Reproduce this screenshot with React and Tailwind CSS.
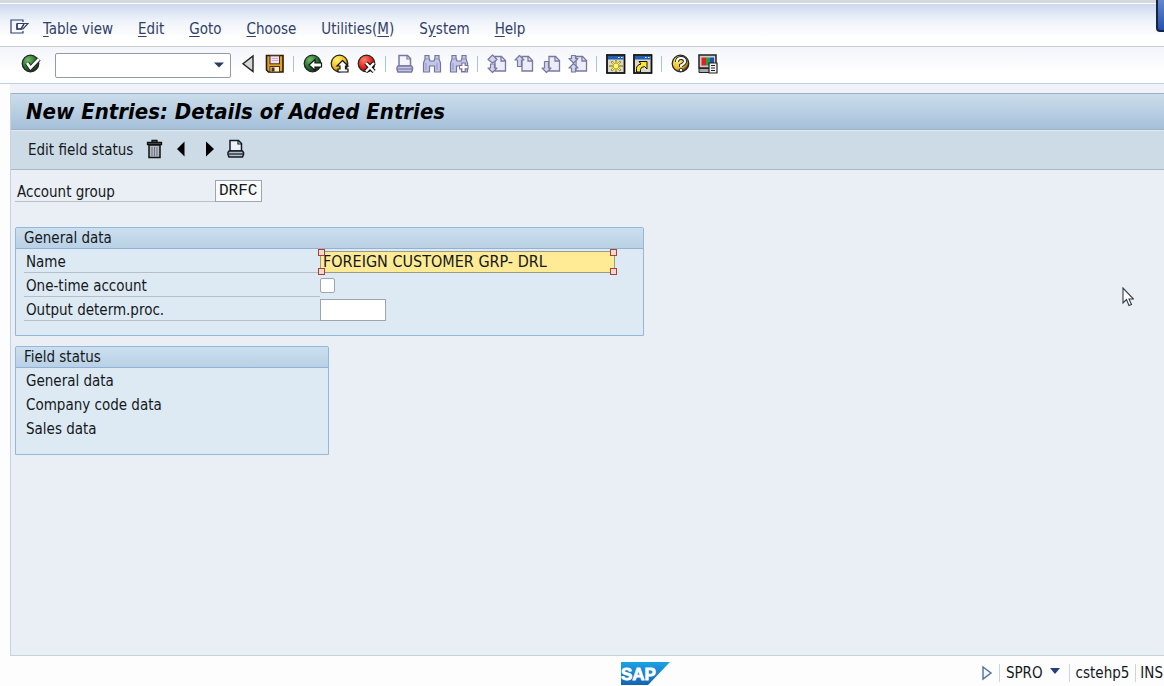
import React, { useState } from 'react';

const menuItems = [
  { before: '', key: 'T', after: 'able view' },
  { before: '', key: 'E', after: 'dit' },
  { before: '', key: 'G', after: 'oto' },
  { before: '', key: 'C', after: 'hoose' },
  { before: 'Utilities(', key: 'M', after: ')' },
  { before: 'S', key: 'y', after: 'stem' },
  { before: '', key: 'H', after: 'elp' }
];

function Icon({ children }) {
  return <svg className="h-5 w-5 shrink-0" viewBox="0 0 20 20" aria-hidden="true">{children}</svg>;
}

function ToolButton({ label, disabled, children }) {
  return <button type="button" aria-label={label} disabled={disabled} className="h-5 w-5 shrink-0">
    <Icon>{children}</Icon>
  </button>;
}

function Separator() {
  return <span className="ml-px mr-0.5 h-4 w-px shrink-0 bg-[#a9c4de]" />;
}

function Ball({ id, light, dark }) {
  return <>
    <defs>
      <radialGradient id={id} cx="35%" cy="28%" r="75%">
        <stop offset="0" stopColor={light} />
        <stop offset="0.7" stopColor={dark} />
        <stop offset="1" stopColor="#222" />
      </radialGradient>
    </defs>
    <circle cx="9.5" cy="9.5" r="8.3" fill={`url(#${id})`} stroke="#222" strokeWidth="1.2" />
  </>;
}

function PageShape() {
  return <>
    <path d="M8 2.500h6.500l4 4V17H8z" fill="#ecedf8" stroke="#7779a0" strokeWidth="1.300" />
    <path d="M14 2.500V7h4.500" fill="none" stroke="#7779a0" strokeWidth="1.300" />
  </>;
}

function Arrow({ d }) {
  return <path d={d} fill="#d4d5ec" stroke="#7779a0" strokeWidth="1.200" strokeLinejoin="round" />;
}

function Binoculars() {
  return <>
    <path d="M3 1.500h4V4l1 3h4l1-3V1.500h4V5l1.500 4v9h-6v-6h-5v6h-6V9L3 5z" fill="#c3c6e8" stroke="#73759e" strokeWidth="1.200" />
    <path d="M3 5h4M13 5h4M4 9v7M15 9v7" stroke="#8f92bd" />
  </>;
}

function Printer({ stroke, paper, tray }) {
  return <>
    <path d="M4 12V1.500h8.500l3 3V12z" fill={paper} stroke={stroke} strokeWidth="1.500" />
    <path d="M12 1.500V5h3.500" fill="none" stroke={stroke} strokeWidth="1.200" />
    <path d="M3 12h13.500l1 1.500v2L16.500 18H3l-1-2.500v-2z" fill={tray} stroke={stroke} strokeWidth="1.500" />
    <path d="M3 15h14" stroke={stroke} strokeWidth="1.200" />
  </>;
}

function WindowShape() {
  return <>
    <rect x="1" y="1" width="17.500" height="18" fill="#dcdac6" stroke="#111" strokeWidth="1.800" />
    <rect x="2" y="2" width="15.500" height="3.500" fill="#1f5fb8" />
    <path d="M12 3.500h1.500M15 3.500h1.500" stroke="#fff" />
  </>;
}

function Toolbar() {
  const [command, setCommand] = useState('');
  return <div className="flex h-[37px] items-center gap-[7px] overflow-hidden border-b border-[#bed0e2] bg-linear-to-b from-[#f3f5fa] to-white to-70% pb-0.5 pl-[21px]">
    <ToolButton label="Enter">
      <Ball id="ok" light="#74ba6b" dark="#176b20" />
      <path d="M6 9l3.500 5L18 5" fill="none" stroke="#222" strokeWidth="4.500" />
      <path d="M6 9l3.500 5L18 5" fill="none" stroke="#fff" strokeWidth="2.600" />
    </ToolButton>
    <div className="relative mt-0.5 mr-1 ml-[7px] w-44 shrink-0">
      <input aria-label="Command" value={command} onChange={e => setCommand(e.target.value)} className="block h-[25px] w-full rounded-xs border border-[#929ba4] bg-white pr-6 pl-1 outline-none" />
      <button type="button" aria-label="Command history" className="absolute top-[7px] right-1.5">
        <svg className="h-2.5 w-3" viewBox="0 0 12 10"><path d="M1 2.500h10L6 7.500z" fill="#293b66" /></svg>
      </button>
    </div>
    <div className="flex items-center gap-[7px]">
      <button type="button" aria-label="Collapse command field" className="-ml-1 h-5 w-5 shrink-0">
        <Icon><path d="M15 2v15.500L5 9.800z" fill="#d5d7dc" stroke="#222" strokeWidth="1.400" /></Icon>
      </button>
      <ToolButton label="Save">
        <path d="M1.500 1.500h16.500v16.500H3.500l-2-2z" fill="#dda128" stroke="#2b1b08" strokeWidth="1.600" />
        <rect x="5" y="1.800" width="9.500" height="8" fill="#f1dff4" stroke="#4b3013" />
        <path d="M7 4.500h6M7 6.500h6" stroke="#c9abd8" />
        <rect x="5" y="12.500" width="9.500" height="5.500" fill="#fff0c9" stroke="#4b3013" />
        <rect x="6.500" y="13.500" width="3" height="4" fill="#4b3013" />
      </ToolButton>
      <Separator />
      <ToolButton label="Back">
        <Ball id="back" light="#72b96a" dark="#166522" />
        <path d="M6 11l6-5.500V9h6.500v4H12v3.500z" fill="#fff" stroke="#111" strokeWidth="1.200" />
      </ToolButton>
      <ToolButton label="Exit">
        <Ball id="exit" light="#fff46c" dark="#f0b31a" />
        <path d="M12.500 6.500l5.500 5.500h-2.500v3H18v3H8v-3h2v-3H7z" fill="#fff" stroke="#111" strokeWidth="1.200" />
      </ToolButton>
      <ToolButton label="Cancel">
        <Ball id="cancel" light="#ff8069" dark="#d81a15" />
        <path d="M9 9l8 8.500M17 9l-8 8.500" stroke="#111" strokeWidth="4.500" />
        <path d="M9 9l8 8.500M17 9l-8 8.500" stroke="#fff" strokeWidth="2.500" />
      </ToolButton>
      <Separator />
      <ToolButton label="Print" disabled><Printer stroke="#7779a0" paper="#f4f4fb" tray="#c4c6e4" /></ToolButton>
      <ToolButton label="Find" disabled><Binoculars /></ToolButton>
      <ToolButton label="Find next" disabled>
        <Binoculars />
        <path d="M14.500 8.500v9.500M10 13.200h9.500" stroke="#73759e" strokeWidth="4.500" />
        <path d="M14.500 9.500v7.500M11 13.200h7.500" stroke="#fff" strokeWidth="2.200" />
      </ToolButton>
      <Separator />
      <ToolButton label="First page" disabled>
        <PageShape />
        <Arrow d="M5.500 1l4.500 4.500L5.500 9 1 5.500z" />
        <Arrow d="M5.500 18.500L10 14H7.500v-4h-4v4H1z" />
      </ToolButton>
      <ToolButton label="Previous page" disabled>
        <PageShape />
        <Arrow d="M5.500 1.500L10 6H7.500v6.500h-4V6H1z" />
      </ToolButton>
      <ToolButton label="Next page" disabled>
        <PageShape />
        <Arrow d="M5.500 18.500L10 14H7.500V7.500h-4V14H1z" />
      </ToolButton>
      <ToolButton label="Last page" disabled>
        <PageShape />
        <Arrow d="M3.500 1.500h4v3H10L5.500 9 1 4.500h2.500z" />
        <Arrow d="M5.500 9.500L10 14H7.500v4h-4v-4H1z" />
      </ToolButton>
      <Separator />
      <ToolButton label="Create session">
        <WindowShape />
        <path d="M10 6v12M3.500 12h13M5.500 7.500l9 9M14.500 7.500l-9 9" stroke="#6b6824" strokeWidth="1.800" />
        <path d="M10 6.500v11M4 12h12M6 8l8 8M14 8l-8 8" stroke="#fff04a" strokeWidth="1.100" />
        <circle cx="10" cy="12" r="2.200" fill="#fff47a" />
      </ToolButton>
      <ToolButton label="Create shortcut">
        <WindowShape />
        <path d="M3.500 18v-3.500q0-3.500 4.500-4.500l-2-2.500h8V15l-2.500-2.500q-4 .5-4 3V18z" fill="#ffe62e" stroke="#111" />
      </ToolButton>
      <Separator />
      <ToolButton label="Help">
        <Ball id="help" light="#fff47a" dark="#efb524" />
        <path d="M6 8q0-4 4-4t4 3.500q0 2-4 4v1.500" fill="none" stroke="#222" strokeWidth="4" />
        <path d="M6 8q0-4 4-4t4 3.500q0 2-4 4v1.500" fill="none" stroke="#fff" strokeWidth="2.200" />
        <circle cx="10" cy="16" r="1.700" fill="#fff" stroke="#222" strokeWidth="0.800" />
      </ToolButton>
      <ToolButton label="Customize local layout">
        <path d="M1 1h17v13H1z" fill="#ccc" stroke="#222" strokeWidth="1.500" />
        <path d="M3.500 3.500h4.500v8H3.500z" fill="#e51e24" />
        <path d="M8 3.500h4v8H8z" fill="#18a83b" />
        <path d="M12 3.500h4v8h-4z" fill="#2849b9" />
        <path d="M1 14.500h12v4H1z" fill="#aaa" stroke="#222" />
        <path d="M11 9h8v10h-8z" fill="#f2f2f2" stroke="#222" strokeWidth="1.200" />
        <path d="M13 11.500h4M13 14h4M13 16.500h4" stroke="#222" />
      </ToolButton>
    </div>
  </div>;
}

function Group({ title, className, children }) {
  return <section className={`max-w-full rounded-t-xs border border-[#94b7da] bg-[#deeaf3] ${className}`}>
    <h2 className="h-[21px] border-b border-[#8fb2d6] bg-linear-to-b from-[#cbdfee] to-[#bad1e5] pl-2 leading-[21px]">{title}</h2>
    {children}
  </section>;
}

function FieldRow({ id, label, children }) {
  return <div className="flex h-6 items-end pl-2">
    <label htmlFor={id} className="h-[23px] w-[296px] shrink-0 border-b border-[#b4bfc8] pl-0.5 leading-6">{label}</label>
    {children}
  </div>;
}

function FocusCorner({ className }) {
  return <span className={`absolute h-[7px] w-[7px] border border-[#b63b31] bg-[#e5ded4] ${className}`} />;
}

function StatusBar() {
  return <footer className="flex h-[30px] shrink-0 items-center overflow-hidden bg-[#fdfdfd] pt-1 whitespace-nowrap">
    <div className="flex flex-1 justify-end">
      <svg className="mr-[310px] h-[23px] w-[50px] shrink-0" viewBox="0 0 50 23" role="img" aria-label="SAP">
        <defs>
          <linearGradient id="sap" x1="0" y1="0" x2="0" y2="1">
            <stop offset="0" stopColor="#1ba2e4" />
            <stop offset="1" stopColor="#1564b5" />
          </linearGradient>
        </defs>
        <path d="M0 0h49L27 23H0z" fill="url(#sap)" />
        <text x="0" y="18" fill="#fff" stroke="#fff" strokeWidth="0.800" fontFamily="Liberation Sans, sans-serif" fontSize="17" fontWeight="700">SAP</text>
      </svg>
    </div>
    <button type="button" aria-label="Show status" className="mr-1.5">
      <svg className="h-4 w-3" viewBox="0 0 12 16"><path d="M2 2l8 6-8 6z" fill="#f4f7fc" stroke="#4e7199" strokeWidth="1.400" /></svg>
    </button>
    <button type="button" className="flex h-[18px] items-center gap-1.5 border-l border-[#ccd3dc] pr-2 pl-1.5">
      SPRO
      <svg className="mb-1 h-2 w-3" viewBox="0 0 12 8"><path d="M1 1h10L6 7z" fill="#233e7d" /></svg>
    </button>
    <span className="flex h-[18px] items-center border-l border-[#ccd3dc] px-1.5">cstehp5</span>
    <span className="flex h-[18px] items-center border-l border-[#ccd3dc] pr-px pl-1">INS</span>
  </footer>;
}

export default function App() {
  const [name, setName] = useState('FOREIGN CUSTOMER GRP- DRL');
  const [oneTime, setOneTime] = useState(false);
  const [output, setOutput] = useState('');
  return <div className="relative flex min-h-screen flex-col overflow-hidden bg-[#fdfdfd] font-['DejaVu_Sans_Condensed','DejaVu_Sans',sans-serif] text-[15px] leading-5 text-[#141820]">
    <header>
      <div className="h-1 border-b border-white bg-[#d5d9df]" />
      <nav className="flex h-[43px] items-center border-b border-[#c9cbce] bg-linear-to-b from-[#cbd9ed] via-[#eff3fa] via-40% to-white to-80% pt-2 pl-2.5 whitespace-nowrap text-[#304068]">
        <button type="button" aria-label="System menu" className="mr-3.5 mb-1 h-4 w-[19px]">
          <svg className="h-4 w-[19px]" viewBox="0 0 19 16" fill="none" stroke="#304068" strokeWidth="1.200">
            <path d="M13 3V1H1v13h12v-2" />
            <path d="M7 4.500h11L13 10H7z" fill="#fff" />
            <path d="M7 5v5h4l3-5" strokeWidth="1.500" />
          </svg>
        </button>
        <ul className="flex gap-[25px]">
          {menuItems.map(item => <li key={item.key}>
            <button type="button">{item.before}<span className="underline underline-offset-2">{item.key}</span>{item.after}</button>
          </li>)}
        </ul>
      </nav>
      <Toolbar />
      <div className="ml-2.5 h-[9px] bg-[#eff3f9]" />
    </header>

    <main className="ml-2.5 flex flex-1 flex-col border-b border-l border-[#c5d2df] bg-[#eaeff5]">
      <h1 className="h-[37px] border-t border-b border-[#9eb1c5] bg-linear-to-b from-[#cbddeb] to-[#a6c0d9] pl-[15px] text-[22px] leading-[35px] font-bold whitespace-nowrap text-black italic">New Entries: Details of Added Entries</h1>
      <div className="flex h-10 items-center border-t border-b border-t-[#e1eaf2] border-b-[#a9b8c7] bg-[#cddbe6] pl-[17px]">
        <button type="button" className="mr-3">Edit field status</button>
        <div className="flex gap-[7px] pb-0.5">
          <ToolButton label="Delete">
            <path d="M7 3V1.500h5V3M2.500 3.500h14v2h-14z" fill="#777" stroke="#111" strokeWidth="1.300" />
            <path d="M4 6h11v12.500H4z" fill="#b4b8c2" stroke="#111" strokeWidth="1.500" />
            <path d="M7 8v9M9.500 8v9M12 8v9" stroke="#6d7380" />
          </ToolButton>
          <ToolButton label="Previous entry"><path d="M12.500 2.500v15L5 10z" fill="#000" /></ToolButton>
          <ToolButton label="Next entry"><path d="M7 2.500v15l8-7.500z" fill="#000" /></ToolButton>
          <ToolButton label="Print list"><Printer stroke="#151b26" paper="#edf2f7" tray="#b4bfcb" /></ToolButton>
        </div>
      </div>

      <div className="flex items-end pt-2.5 pl-1">
        <label htmlFor="account-group" className="h-[22px] w-50 border-b border-[#b8c0c8] pl-0.5 leading-6">Account group</label>
        <input id="account-group" readOnly value="DRFC" className="h-[22px] w-[47px] border border-[#9da5ae] bg-[#f9fafb] px-[3px] font-['Liberation_Mono',monospace] text-base outline-none" />
      </div>

      <div className="mt-[25px] flex flex-col items-start gap-2.5 pr-2.5 pl-1">
        <Group title="General data" className="h-[109px] w-[629px]">
          <FieldRow id="name" label="Name">
            <div className="relative w-[295px]">
              <input id="name" value={name} onChange={e => setName(e.target.value)} className="block h-[22px] w-full border border-[#9c9b87] bg-[#ffeb96] px-0.5 text-base outline-none" />
              <FocusCorner className="-top-0.5 -left-0.5" />
              <FocusCorner className="-top-0.5 -right-0.5" />
              <FocusCorner className="-bottom-0.5 -left-0.5" />
              <FocusCorner className="-right-0.5 -bottom-0.5" />
            </div>
          </FieldRow>
          <FieldRow id="one-time" label="One-time account">
            <input id="one-time" type="checkbox" checked={oneTime} onChange={e => setOneTime(e.target.checked)} className="mb-1 h-[15px] w-[15px] appearance-none rounded-xs border border-[#9ba6b2] bg-white checked:bg-[#304068]" />
          </FieldRow>
          <FieldRow id="output" label="Output determ.proc.">
            <input id="output" value={output} onChange={e => setOutput(e.target.value)} className="h-[22px] w-[66px] border border-[#9ba6b2] bg-white px-0.5 outline-none" />
          </FieldRow>
        </Group>

        <Group title="Field status" className="h-[109px] w-[314px]">
          <ul className="pt-px pl-2.5 leading-6">
            <li>General data</li>
            <li>Company code data</li>
            <li>Sales data</li>
          </ul>
        </Group>
      </div>
    </main>
    <StatusBar />

    <div className="absolute top-0 right-0 h-8 w-2 rounded-bl-sm border-b-2 border-l-2 border-[#14224a] bg-linear-to-b from-[#6488cb] to-[#2451ab]" />
    <svg className="pointer-events-none absolute top-[287px] right-[30px] h-5 w-3" viewBox="0 0 12 20">
      <path d="M1 1v15l3.500-3.500L7 18.500l2.500-1-2.500-5.500h4.500z" fill="#fff" stroke="#333b45" strokeWidth="1.100" />
    </svg>
  </div>;
}
